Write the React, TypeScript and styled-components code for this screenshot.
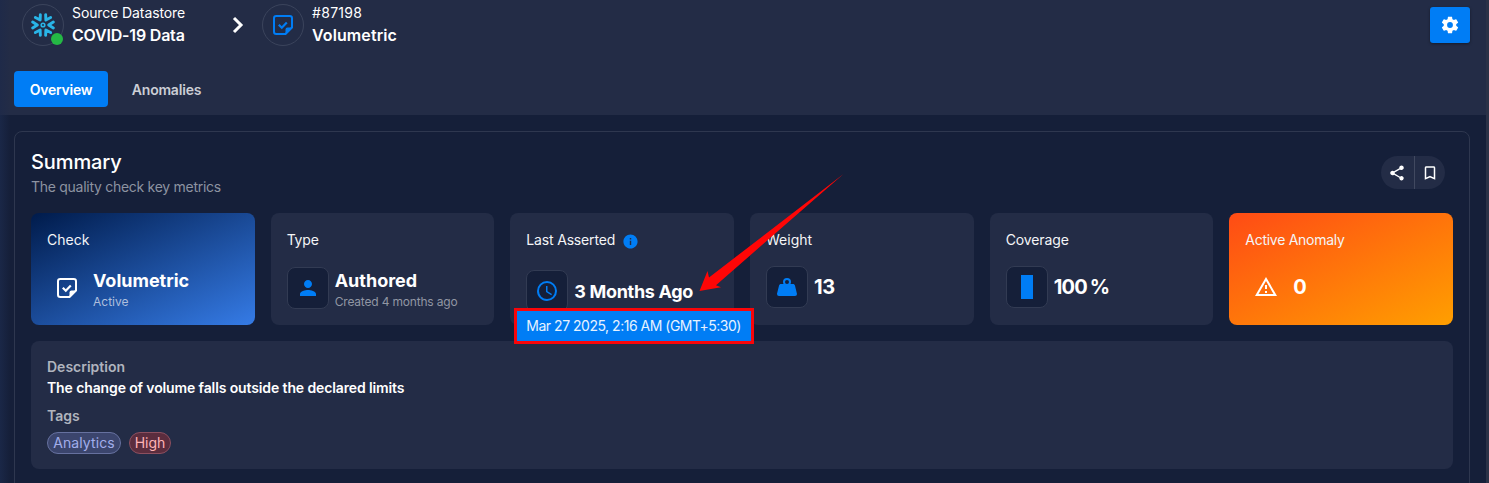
import React from "react";
import styled, { createGlobalStyle, css } from "styled-components";
import { MdShare, MdBookmarkBorder, MdPerson, MdInfo } from "react-icons/md";

const GlobalStyle = createGlobalStyle`
  * { box-sizing: border-box; }
  body { margin: 0; background: #151f39; color: #fff; overflow: hidden;
    font-family: Inter, "Liberation Sans", sans-serif; }
  svg { display: block; flex: none; }
`;

const Page = styled.div`
  display: flex;
  height: 483px;
  overflow: hidden;
`;
const Content = styled.div`
  flex: 1;
  min-width: 0;
  background: linear-gradient(90deg, #1a2747 0, #151f39 10px);
`;
const ScrollTrack = styled.div`
  width: 3px;
  background: #2b3247;
`;
const Header = styled.header`
  height: 115px;
  padding: 4px 16px 0 22px;
  background: linear-gradient(90deg, #1f2a49 0, #232c46 10px);
`;
const HeaderRow = styled.div`
  display: flex;
  align-items: flex-start;
  height: 67px;
`;
const Crumb = styled.div<{ $w: number }>`
  display: flex;
  gap: 8px;
  width: ${(p) => p.$w}px;
`;
const Avatar = styled.div`
  position: relative;
  display: flex;
  align-items: center;
  justify-content: center;
  width: 42px;
  height: 42px;
  border: 1px solid #3b445c;
  border-radius: 50%;
  color: #007df5;
`;
const StatusDot = styled.span`
  position: absolute;
  right: 0;
  bottom: 0;
  width: 12px;
  height: 12px;
  border-radius: 50%;
  background: #24b845;
`;
const Stack = styled.div<{ $top?: number }>`
  display: flex;
  flex-direction: column;
  padding-top: ${(p) => p.$top ?? 0}px;
`;
const Text = styled.span<{
  $size: number;
  $line: number;
  $weight?: number;
  $color?: string;
  $track?: number;
  $word?: number;
}>`
  font-size: ${(p) => p.$size}px;
  line-height: ${(p) => p.$line}px;
  font-weight: ${(p) => p.$weight ?? 400};
  color: ${(p) => p.$color ?? "#fff"};
  letter-spacing: ${(p) => p.$track ?? 0}px;
  word-spacing: ${(p) => p.$word ?? 0}px;
  white-space: nowrap;
`;
const ChevronSlot = styled.div`
  padding: 12px 0 0 4px;
  width: 34px;
`;
const GearButton = styled.button`
  display: flex;
  align-items: center;
  justify-content: center;
  width: 40px;
  height: 36px;
  margin: 3px 0 0 auto;
  padding: 0;
  border: 0;
  border-radius: 3px;
  background: #007df5;
  color: #fff;
  box-shadow: 0 1px 3px rgba(0, 0, 0, 0.4);
`;
const Tabs = styled.nav`
  display: flex;
  gap: 8px;
  margin-left: -8px;
`;
const Tab = styled.button<{ $active?: boolean }>`
  display: flex;
  align-items: center;
  justify-content: center;
  width: ${(p) => (p.$active ? 94 : 101)}px;
  height: 36px;
  padding: 2px 0 0;
  border: 0;
  border-radius: 4px;
  font-family: inherit;
  background: ${(p) => (p.$active ? "#007df5" : "transparent")};
`;
const Panel = styled.section`
  height: 380px;
  margin: 16px 16px 0 14px;
  padding: 16px 16px 0;
  border: 1px solid #2e374f;
  border-radius: 8px;
`;
const PanelHead = styled.div`
  display: flex;
  justify-content: space-between;
  height: 65px;
`;
const Actions = styled.div`
  display: flex;
  width: 64px;
  height: 33px;
  margin: 8px 8px 0 0;
  border-radius: 17px;
  background: #232c46;
  overflow: hidden;
`;
const Action = styled.button`
  display: flex;
  flex: 1;
  align-items: center;
  justify-content: center;
  padding: 0 1px 0 0;
  border: 0;
  background: none;
  color: #fff;
  & + & { flex: 0 0 31px; border-left: 1px solid #414960; }
`;
const Cards = styled.div`
  display: grid;
  grid-template-columns: repeat(6, 1fr);
  gap: 16px;
`;
const tones = {
  plain: css`background: #232c46;`,
  blue: css`background: linear-gradient(155deg, #001b4b 0%, #357be6 100%);`,
  orange: css`background: linear-gradient(155deg, #ff4b15 0%, #ff9f00 100%);`,
};
const Card = styled.article<{ $tone?: keyof typeof tones }>`
  position: relative;
  height: 112px;
  padding: 17px 16px 0;
  border-radius: 8px;
  ${(p) => tones[p.$tone ?? "plain"]}
`;
const CardTitle = styled.div`
  display: flex;
  align-items: center;
  gap: 7px;
  height: 20px;
  svg { margin-top: 3px; }
`;
const Metric = styled.div<{ $top?: number }>`
  display: flex;
  align-items: center;
  gap: 6px;
  margin-top: ${(p) => p.$top ?? 16}px;
  height: 42px;
`;
const IconBox = styled.div<{ $bare?: boolean; $w?: number }>`
  display: flex;
  align-items: center;
  justify-content: center;
  width: ${(p) => p.$w ?? 42}px;
  height: 42px;
  border: 1px solid ${(p) => (p.$bare ? "transparent" : "#323b53")};
  border-radius: 8px;
  background: ${(p) => (p.$bare ? "transparent" : "#151f39")};
  color: ${(p) => (p.$bare ? "#fff" : "#007df5")};
`;
const CoverageBar = styled.div`
  width: 12px;
  height: 24px;
  background: #007df5;
`;
const Tooltip = styled.div`
  position: absolute;
  z-index: 2;
  left: 4px;
  top: 95px;
  display: flex;
  align-items: center;
  width: 240px;
  height: 36px;
  padding-left: 9px;
  border: 3px solid #f90509;
  background: #007df5;
`;
const Arrow = styled.svg`
  position: absolute;
  z-index: 3;
  left: 185px;
  top: -43px;
  overflow: visible;
`;
const Details = styled.div`
  display: flex;
  flex-direction: column;
  height: 128px;
  margin-top: 16px;
  padding: 15px 16px;
  border-radius: 8px;
  background: #232c46;
`;
const TagsBlock = styled.div`
  margin-top: 7px;
`;
const TagRow = styled.div`
  display: flex;
  gap: 8px;
  margin-top: 6px;
`;
const Tag = styled.div<{ $w: number; $bg: string; $line: string }>`
  display: flex;
  align-items: center;
  justify-content: center;
  width: ${(p) => p.$w}px;
  height: 22px;
  border: 1px solid ${(p) => p.$line};
  border-radius: 11px;
  background: ${(p) => p.$bg};
`;

const NoteCheck = () => (
  <svg width="24" height="24" viewBox="0 0 24 24" fill="none">
    <path d="M14.5 21H5.300A2.300 2.300 0 0 1 3 18.700V5.300A2.300 2.300 0 0 1 5.300 3H18.700A2.300 2.300 0 0 1 21 5.300V14.500Z" stroke="currentColor" strokeWidth="2" strokeLinejoin="round" />
    <path d="M14.500 21V16.500A2 2 0 0 1 16.500 14.500H21Z" fill="currentColor" />
    <path d="M7.800 11.700l3 3 5-5.200" stroke="currentColor" strokeWidth="2.200" />
  </svg>
);
const Snowflake = () => (
  <svg width="24" height="24" viewBox="-12 -12 24 24" fill="none" stroke="#29b5e8" strokeLinecap="round" strokeLinejoin="round">
    <circle r="1.800" strokeWidth="1.600" />
    {[0, 60, 120, 180, 240, 300].map((a) => (
      <path key={a} d="M-10.300 -2.900L-5.700 0L-10.300 2.900" strokeWidth="2.900" transform={`rotate(${a})`} />
    ))}
  </svg>
);
const Glyph = ({ d, size }: { d: string; size: number }) => (
  <svg width={size} height={size} viewBox="0 0 24 24" fill="currentColor"><path d={d} /></svg>
);
const COG = "M12,15.5A3.5,3.5 0 0,1 8.5,12A3.5,3.5 0 0,1 12,8.5A3.5,3.5 0 0,1 15.5,12A3.5,3.5 0 0,1 12,15.5M19.43,12.97C19.47,12.65 19.5,12.33 19.5,12C19.5,11.67 19.47,11.34 19.43,11L21.54,9.37C21.73,9.22 21.78,8.95 21.66,8.73L19.66,5.27C19.54,5.05 19.27,4.96 19.05,5.05L16.56,6.05C16.04,5.66 15.5,5.32 14.87,5.07L14.5,2.42C14.46,2.18 14.25,2 14,2H10C9.75,2 9.54,2.18 9.5,2.42L9.13,5.07C8.5,5.32 7.96,5.66 7.44,6.05L4.95,5.05C4.73,4.96 4.46,5.05 4.34,5.27L2.34,8.73C2.21,8.95 2.27,9.22 2.46,9.37L4.57,11C4.53,11.34 4.5,11.67 4.5,12C4.5,12.33 4.53,12.65 4.57,12.97L2.46,14.63C2.27,14.78 2.21,15.05 2.34,15.27L4.34,18.73C4.46,18.95 4.73,19.03 4.95,18.95L7.44,17.94C7.96,18.34 8.5,18.68 9.13,18.93L9.5,21.58C9.54,21.82 9.75,22 10,22H14C14.25,22 14.46,21.82 14.5,21.58L14.87,18.93C15.5,18.67 16.04,18.34 16.56,17.94L19.05,18.95C19.27,19.03 19.54,18.95 19.66,18.73L21.66,15.27C21.78,15.05 21.73,14.78 21.54,14.63L19.43,12.97Z";
const WEIGHT = "M12,3A4,4 0 0,1 16,7C16,7.73 15.81,8.41 15.46,9H18C18.95,9 19.75,9.67 19.95,10.56C21.96,18.57 22,18.78 22,19A2,2 0 0,1 20,21H4A2,2 0 0,1 2,19C2,18.78 2.04,18.57 4.05,10.56C4.25,9.67 5.05,9 6,9H8.54C8.19,8.41 8,7.73 8,7A4,4 0 0,1 12,3M12,5A2,2 0 0,0 10,7A2,2 0 0,0 12,9A2,2 0 0,0 14,7A2,2 0 0,0 12,5Z";
const CLOCK = "M12,20A8,8 0 0,0 20,12A8,8 0 0,0 12,4A8,8 0 0,0 4,12A8,8 0 0,0 12,20M12,2A10,10 0 0,1 22,12A10,10 0 0,1 12,22C6.47,22 2,17.5 2,12A10,10 0 0,1 12,2M12.5,7V12.25L17,14.92L16.25,16.15L11,13V7H12.5Z";
const ALERT = "M12,2L1,21H23M12,6L19.53,19H4.47M11,10V14H13V10M11,16V18H13V16";

const Title = ({ children, track }: { children: React.ReactNode; track?: number }) => (
  <Text $size={14} $line={20} $track={track} $color="#f4f5f7">{children}</Text>
);

export default function App() {
  return (
    <>
      <GlobalStyle />
      <Page>
        <Content>
          <Header>
            <HeaderRow>
              <Crumb $w={206}>
                <Avatar>
                  <Snowflake />
                  <StatusDot />
                </Avatar>
                <Stack>
                  <Text $size={14} $line={18} $track={-0.1}>Source Datastore</Text>
                  <Text $size={16} $line={26} $weight={600} $track={-0.2}>COVID-19 Data</Text>
                </Stack>
              </Crumb>
              <ChevronSlot>
                <svg width="12" height="18" viewBox="0 0 12 18" fill="none" stroke="#fff" strokeWidth="3">
                  <path d="M2 2l7 7-7 7" />
                </svg>
              </ChevronSlot>
              <Crumb $w={300}>
                <Avatar><NoteCheck /></Avatar>
                <Stack>
                  <Text $size={14} $line={18} $track={0.3}>#87198</Text>
                  <Text $size={16} $line={26} $weight={600} $track={0.1}>Volumetric</Text>
                </Stack>
              </Crumb>
              <GearButton><Glyph d={COG} size={20} /></GearButton>
            </HeaderRow>
            <Tabs>
              <Tab $active><Text $size={14} $line={20} $weight={600} $track={-0.25}>Overview</Text></Tab>
              <Tab><Text $size={14} $line={20} $weight={600} $track={-0.2} $color="#cbced5">Anomalies</Text></Tab>
            </Tabs>
          </Header>
          <Panel>
            <PanelHead>
              <Stack>
                <Text $size={20} $line={28} $weight={500} $track={-0.1}>Summary</Text>
                <Text $size={14} $line={21} $color="#8d93a1" $track={-0.28}>The quality check key metrics</Text>
              </Stack>
              <Actions>
                <Action><MdShare size={18} /></Action>
                <Action><MdBookmarkBorder size={18} /></Action>
              </Actions>
            </PanelHead>
            <Cards>
              <Card $tone="blue">
                <CardTitle><Title>Check</Title></CardTitle>
                <Metric $top={17}>
                  <IconBox $bare $w={40}><NoteCheck /></IconBox>
                  <Stack $top={3}>
                    <Text $size={18} $line={24} $weight={700}>Volumetric</Text>
                    <Text $size={12} $line={18} $color="#aebfdd">Active</Text>
                  </Stack>
                </Metric>
              </Card>
              <Card>
                <CardTitle><Title track={-0.2}>Type</Title></CardTitle>
                <Metric $top={17}>
                  <IconBox><MdPerson size={24} /></IconBox>
                  <Stack $top={3}>
                    <Text $size={18} $line={24} $weight={700}>Authored</Text>
                    <Text $size={12} $line={18} $color="#9196a3" $track={-0.18}>Created 4 months ago</Text>
                  </Stack>
                </Metric>
              </Card>
              <Card>
                <CardTitle>
                  <Title track={-0.17}>Last Asserted</Title>
                  <MdInfo size={17} color="#007df5" />
                </CardTitle>
                <Metric $top={20}>
                  <IconBox><Glyph d={CLOCK} size={24} /></IconBox>
                  <Stack $top={2}><Text $size={18} $line={24} $weight={700} $track={-0.33}>3 Months Ago</Text></Stack>
                </Metric>
                <Tooltip><Text $size={14} $line={20} $color="#e6f2ff" $track={-0.49}>Mar 27 2025, 2:16 AM (GMT+5:30)</Text></Tooltip>
                <Arrow width="150" height="122" viewBox="695 170 150 122" fill="#ff0606">
                  <path d="M843.500 174L716 285.200L721 287.300L699.500 291L707.500 271L709 277.500Z" />
                </Arrow>
              </Card>
              <Card>
                <CardTitle><Title>Weight</Title></CardTitle>
                <Metric><IconBox><Glyph d={WEIGHT} size={24} /></IconBox><Text $size={20} $line={28} $weight={700} $track={-0.3}>13</Text></Metric>
              </Card>
              <Card>
                <CardTitle><Title track={-0.1}>Coverage</Title></CardTitle>
                <Metric><IconBox><CoverageBar /></IconBox><Text $size={20} $line={28} $weight={700} $track={-0.7} $word={-1.5}>100 %</Text></Metric>
              </Card>
              <Card $tone="orange">
                <CardTitle><Title track={-0.28}>Active Anomaly</Title></CardTitle>
                <Metric><IconBox $bare><Glyph d={ALERT} size={24} /></IconBox><Text $size={20} $line={28} $weight={700}>0</Text></Metric>
              </Card>
            </Cards>
            <Details>
              <Text $size={14} $line={21} $weight={600} $color="#b0b4be">Description</Text>
              <Text $size={14} $line={21} $weight={600} $track={-0.12}>The change of volume falls outside the declared limits</Text>
              <TagsBlock>
                <Text $size={14} $line={21} $weight={600} $color="#b0b4be">Tags</Text>
                <TagRow>
                  <Tag $w={74} $bg="#3b456d" $line="#66719f"><Text $size={14} $line={20} $color="#a2adeb" $track={0.1}>Analytics</Text></Tag>
                  <Tag $w={42} $bg="#5b2d3e" $line="#8c4f5f"><Text $size={14} $line={20} $color="#ffb3b5">High</Text></Tag>
                </TagRow>
              </TagsBlock>
            </Details>
          </Panel>
        </Content>
        <ScrollTrack />
      </Page>
    </>
  );
}
